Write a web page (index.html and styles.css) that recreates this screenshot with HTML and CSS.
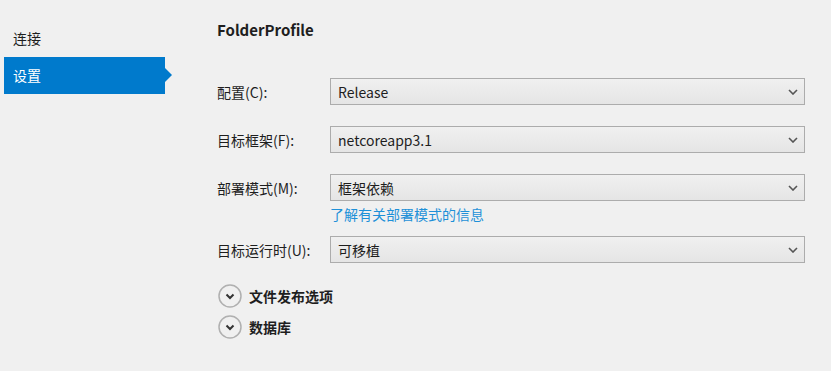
FILE: index.html
```html
<!DOCTYPE html>
<html lang="zh">
<head>
<meta charset="utf-8">
<link rel="stylesheet" href="styles.css">
</head>
<body>
<div class="app">
  <nav class="nav">
    <div class="nav-item">连接</div>
    <div class="nav-item active">设置</div>
  </nav>
  <main class="main">
    <h1 class="title">FolderProfile</h1>
    <div class="form">
      <div class="row">
        <label class="label">配置(C):</label>
        <div class="select"><span>Release</span><svg class="chev" viewBox="0 0 10 6" width="10" height="6"><path d="M1 1 L5 5 L9 1" fill="none" stroke="#555" stroke-width="1.6"/></svg></div>
      </div>
      <div class="row">
        <label class="label">目标框架(F):</label>
        <div class="select"><span>netcoreapp3.1</span><svg class="chev" viewBox="0 0 10 6" width="10" height="6"><path d="M1 1 L5 5 L9 1" fill="none" stroke="#555" stroke-width="1.6"/></svg></div>
      </div>
      <div class="row">
        <label class="label">部署模式(M):</label>
        <div class="select"><span>框架依赖</span><svg class="chev" viewBox="0 0 10 6" width="10" height="6"><path d="M1 1 L5 5 L9 1" fill="none" stroke="#555" stroke-width="1.6"/></svg></div>
      </div>
      <div class="link-row"><a class="link">了解有关部署模式的信息</a></div>
      <div class="row">
        <label class="label">目标运行时(U):</label>
        <div class="select"><span>可移植</span><svg class="chev" viewBox="0 0 10 6" width="10" height="6"><path d="M1 1 L5 5 L9 1" fill="none" stroke="#555" stroke-width="1.6"/></svg></div>
      </div>
    </div>
    <div class="expanders">
      <div class="expander">
        <svg class="circ" viewBox="0 0 24 24" width="24" height="24"><circle cx="12" cy="12" r="11" fill="none" stroke="#b0b0b0" stroke-width="1.5"/><path d="M8.5 10.5 L12 14 L15.5 10.5" fill="none" stroke="#333" stroke-width="2"/></svg>
        <span>文件发布选项</span>
      </div>
      <div class="expander">
        <svg class="circ" viewBox="0 0 24 24" width="24" height="24"><circle cx="12" cy="12" r="11" fill="none" stroke="#b0b0b0" stroke-width="1.5"/><path d="M8.5 10.5 L12 14 L15.5 10.5" fill="none" stroke="#333" stroke-width="2"/></svg>
        <span>数据库</span>
      </div>
    </div>
  </main>
</div>
</body>
</html>
```
FILE: styles.css
```css
* { box-sizing: border-box; }
html, body { margin: 0; padding: 0; }
body {
  background: #f0f0f0;
  font-family: "Noto Sans CJK SC", "Noto Sans", sans-serif;
  font-size: 14px;
  color: #1e1e1e;
  width: 831px;
  height: 371px;
  overflow: hidden;
}
.app { display: flex; }
.nav {
  width: 166px;
  margin-left: 4px;
  padding-top: 20px;
  display: flex;
  flex-direction: column;
}
.nav-item {
  height: 37px;
  line-height: 37px;
  padding-left: 9px;
  position: relative;
  font-size: 14px;
}
.nav-item.active {
  background: #007acc;
  color: #fff;
  width: 161px;
}
.nav-item.active::after {
  content: "";
  position: absolute;
  right: -7px;
  top: 11px;
  border-left: 7px solid #007acc;
  border-top: 7px solid transparent;
  border-bottom: 7px solid transparent;
}
.main {
  margin-left: 47px;
  width: 588px;
  display: flex;
  flex-direction: column;
}
.title {
  margin: 19px 0 0 0;
  font-size: 15px;
  font-weight: bold;
  height: 22px;
  line-height: 22px;
}
.form { margin-top: 37px; display: flex; flex-direction: column; }
.row {
  display: flex;
  align-items: center;
  height: 27px;
  margin-bottom: 21px;
}
.label { width: 113px; font-size: 14px; }
.select {
  width: 475px;
  height: 27px;
  border: 1px solid #acacac;
  background: linear-gradient(#f0f0f0, #e5e5e5);
  display: flex;
  align-items: center;
  justify-content: space-between;
  padding: 0 6px 0 7px;
  font-size: 14px;
}
.chev { display: block; }
.row:nth-child(3) { margin-bottom: 3px; }
.link-row {
  padding-left: 113px;
  height: 24px;
  line-height: 20px;
  margin-bottom: 8px;
}
.link { color: #1e90d8; font-size: 14px; }
.expanders { margin-top: 0; display: flex; flex-direction: column; gap: 7px; }
.expander {
  display: flex;
  align-items: center;
  gap: 7px;
  height: 24px;
  font-weight: bold;
  font-size: 14px;
}
.circ { display: block; margin-left: 1px; }
```
